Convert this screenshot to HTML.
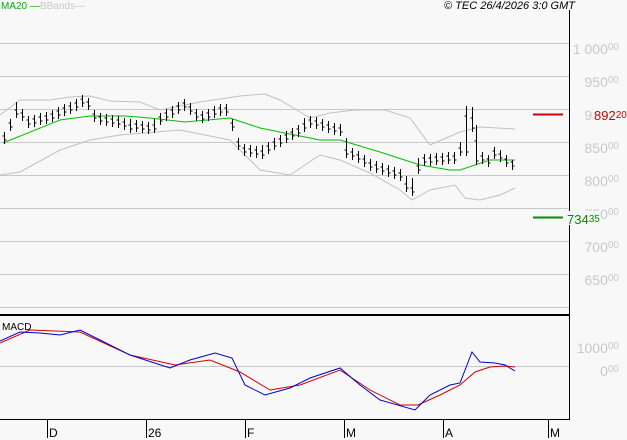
<!DOCTYPE html>
<html><head><meta charset="utf-8"><style>
html,body{margin:0;padding:0;background:#f8f8f8;width:627px;height:440px;overflow:hidden}
svg{display:block;font-family:"Liberation Sans",sans-serif}
</style></head><body>
<svg width="627" height="440" xmlns="http://www.w3.org/2000/svg">
<rect width="627" height="440" fill="#f8f8f8"/>
<g stroke="#c8c8c8" stroke-width="1">
<line x1="0" y1="43.5" x2="569" y2="43.5"/><line x1="0" y1="76.5" x2="569" y2="76.5"/>
<line x1="0" y1="109.5" x2="569" y2="109.5"/><line x1="0" y1="142.5" x2="569" y2="142.5"/>
<line x1="0" y1="175.5" x2="569" y2="175.5"/><line x1="0" y1="208.5" x2="569" y2="208.5"/>
<line x1="0" y1="241.5" x2="569" y2="241.5"/><line x1="0" y1="274.5" x2="569" y2="274.5"/>
<line x1="0" y1="307.5" x2="569" y2="307.5"/><line x1="0" y1="366.5" x2="569" y2="366.5"/>
</g>
<line x1="0" y1="315" x2="569" y2="315" stroke="#000" stroke-width="2"/>
<line x1="569.5" y1="10" x2="569.5" y2="420" stroke="#000"/>
<line x1="0" y1="419.5" x2="570" y2="419.5" stroke="#000"/>
<g stroke="#000"><line x1="47.5" y1="419" x2="47.5" y2="438"/><line x1="146.5" y1="419" x2="146.5" y2="438"/><line x1="245.5" y1="419" x2="245.5" y2="438"/><line x1="344.5" y1="419" x2="344.5" y2="438"/><line x1="443.5" y1="419" x2="443.5" y2="438"/><line x1="548.5" y1="419" x2="548.5" y2="438"/></g>
<g font-size="12" fill="#000"><text x="49" y="437">D</text><text x="148" y="437">26</text><text x="247" y="437">F</text><text x="346" y="437">M</text><text x="445" y="437">A</text><text x="550" y="437">M</text></g>
<g font-size="14" fill="#c8c8c8" text-anchor="end">
<text x="619" y="54">1 000<tspan font-size="10" dy="-4">00</tspan></text>
<text x="619" y="87">950<tspan font-size="10" dy="-4">00</tspan></text>
<text x="619" y="120">900<tspan font-size="10" dy="-4">00</tspan></text>
<text x="619" y="153">850<tspan font-size="10" dy="-4">00</tspan></text>
<text x="619" y="186">800<tspan font-size="10" dy="-4">00</tspan></text>
<text x="619" y="219">750<tspan font-size="10" dy="-4">00</tspan></text>
<text x="619" y="252">700<tspan font-size="10" dy="-4">00</tspan></text>
<text x="619" y="285">650<tspan font-size="10" dy="-4">00</tspan></text>
<text x="619" y="353">1000<tspan font-size="10" dy="-4">00</tspan></text>
<text x="619" y="376">0<tspan font-size="10" dy="-4">00</tspan></text>
</g>
<text x="1" y="9" font-size="10" fill="#00b000">MA20 —</text>
<text x="40" y="9" font-size="10" fill="#c8c8c8">BBands—</text>
<text x="575" y="9" font-size="11" font-style="italic" text-anchor="end" fill="#000">© TEC 26/4/2026 3:0 GMT</text>
<text x="2" y="330" font-size="10" fill="#000">MACD</text>
<path d="M0 115L20 100L50 100L70 97L90 96L110 101L140 102L160 110L200 102L240 96L265 94L280 100L310 118L330 113L355 110L385 110L410 118L430 145L460 132L480 127L515 129" fill="none" stroke="#c0c0c0"/>
<path d="M0 175L20 172L60 150L90 140L120 135L180 130L230 140L260 170L290 175L320 155L340 160L370 173L400 190L412 200L430 190L455 185L465 198L480 200L500 195L515 188" fill="none" stroke="#c0c0c0"/>
<path d="M3 143L60 120L90 116L125 116L150 118L185 122L230 118L260 128L300 136L320 140L340 140L380 152L420 165L450 170L460 170L490 160L515 160" fill="none" stroke="#00c000"/>
<path fill="none" stroke="#000" d="
M4.5 132v12m0-4h2m-4-4h2 M10.5 119v12m0-4h2m-4-4h2 M16.5 102v16m0-4h2m-4-4h2 M22.5 109v12m0-4h2m-4-4h2
M28.5 116v12m0-4h2m-4-4h2 M34.5 115v12m0-4h2m-4-4h2 M40.5 113v12m0-4h2m-4-4h2 M46.5 112v12m0-4h2m-4-4h2
M52.5 110v12m0-4h2m-4-4h2 M58.5 107v12m0-4h2m-4-4h2 M64.5 104v12m0-4h2m-4-4h2 M70.5 102v12m0-4h2m-4-4h2
M76.5 99v12m0-4h2m-4-4h2 M82.5 95v12m0-4h2m-4-4h2 M88.5 98v12m0-4h2m-4-4h2 M94.5 110v12m0-4h2m-4-4h2
M100.5 113v12m0-4h2m-4-4h2 M106.5 114v12m0-4h2m-4-4h2 M112.5 115v12m0-4h2m-4-4h2 M118.5 116v12m0-4h2m-4-4h2
M124.5 118v12m0-4h2m-4-4h2 M130.5 119v14m0-4h2m-4-4h2 M136.5 120v12m0-4h2m-4-4h2 M142.5 121v12m0-4h2m-4-4h2
M148.5 122v12m0-4h2m-4-4h2 M154.5 119v14m0-4h2m-4-4h2 M160.5 113v12m0-4h2m-4-4h2 M166.5 109v12m0-4h2m-4-4h2
M172.5 106v12m0-4h2m-4-4h2 M178.5 102v12m0-4h2m-4-4h2 M184.5 99v12m0-4h2m-4-4h2 M190.5 103v12m0-4h2m-4-4h2
M196.5 109v12m0-4h2m-4-4h2 M202.5 111v12m0-4h2m-4-4h2 M208.5 109v12m0-4h2m-4-4h2 M214.5 106v12m0-4h2m-4-4h2
M220.5 104v12m0-4h2m-4-4h2 M226.5 104v12m0-4h2m-4-4h2 M232.5 119v12m0-4h2m-4-4h2 M238.5 138v12m0-4h2m-4-4h2
M244.5 144v12m0-4h2m-4-4h2 M250.5 145v12m0-4h2m-4-4h2 M256.5 146v12m0-4h2m-4-4h2 M262.5 145v14m0-4h2m-4-4h2
M268.5 142v12m0-4h2m-4-4h2 M274.5 138v12m0-4h2m-4-4h2 M280.5 135v12m0-4h2m-4-4h2 M286.5 131v12m0-4h2m-4-4h2
M292.5 128v12m0-4h2m-4-4h2 M298.5 125v12m0-4h2m-4-4h2 M304.5 118v14m0-4h2m-4-4h2 M310.5 116v12m0-4h2m-4-4h2
M316.5 117v12m0-4h2m-4-4h2 M322.5 119v12m0-4h2m-4-4h2 M328.5 121v12m0-4h2m-4-4h2 M334.5 123v12m0-4h2m-4-4h2
M340.5 124v12m0-4h2m-4-4h2 M346.5 138v20m0-4h2m-4-4h2 M352.5 148v12m0-4h2m-4-4h2 M358.5 151v12m0-4h2m-4-4h2
M364.5 155v12m0-4h2m-4-4h2 M370.5 159v12m0-4h2m-4-4h2 M376.5 161v12m0-4h2m-4-4h2 M382.5 163v12m0-4h2m-4-4h2
M388.5 165v12m0-4h2m-4-4h2 M394.5 167v12m0-4h2m-4-4h2 M400.5 169v12m0-4h2m-4-4h2 M406.5 176v16m0-4h2m-4-4h2
M412.5 178v18m0-4h2m-4-4h2 M418.5 158v16m0-4h2m-4-4h2 M424.5 154v12m0-4h2m-4-4h2 M430.5 154v12m0-4h2m-4-4h2
M436.5 153v12m0-4h2m-4-4h2 M442.5 153v12m0-4h2m-4-4h2 M448.5 152v12m0-4h2m-4-4h2 M454.5 152v12m0-4h2m-4-4h2
M460.5 142v14m0-4h2m-4-4h2 M466.5 106v50m0-4h2m-4-36h2 M472.5 107v25m0-4h2m-4-10h2 M476.5 125v40m0-4h2m-4-20h2
M482.5 152v12m0-4h2m-4-4h2 M488.5 155v12m0-4h2m-4-4h2 M494.5 147v12m0-4h2m-4-4h2 M500.5 150v12m0-4h2m-4-4h2
M506.5 155v12m0-4h2m-4-4h2 M512.5 160v10m0-4h2m-4-4h2"/>
<path d="M0 343L30 330L80 332L130 355L175 365L210 360L240 372L270 390L300 385L340 370L370 390L400 405L418 405L440 395L460 385L475 372L490 367L505 366L515 367" fill="none" stroke="#d00000"/>
<path d="M0 341L20 332L40 333L60 335L80 330L100 340L130 355L170 368L190 360L215 353L232 358L245 385L265 395L290 388L310 378L340 368L360 385L380 400L415 410L430 395L450 385L460 383L467 365L472 352L480 362L495 363L505 365L515 371" fill="none" stroke="#0000d0"/>
<line x1="533" y1="114.5" x2="563" y2="114.5" stroke="#d00000" stroke-width="2"/>
<rect x="592" y="106" width="35" height="16" fill="#f8f8f8"/>
<text x="594" y="120" font-size="13" fill="#d00000">892<tspan font-size="10" dy="-2">20</tspan></text>
<line x1="533" y1="217.5" x2="563" y2="217.5" stroke="#009000" stroke-width="2"/>
<rect x="566" y="211" width="34" height="14" fill="#f8f8f8"/>
<text x="567" y="224" font-size="13" fill="#009000">734<tspan font-size="10" dy="-2">35</tspan></text>
</svg>
</body></html>
